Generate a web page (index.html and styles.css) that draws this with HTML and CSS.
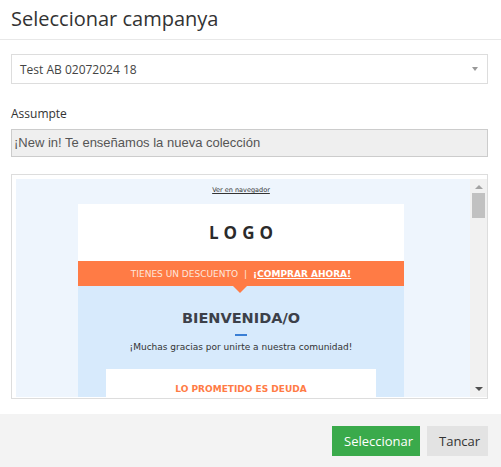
FILE: index.html
```html
<!DOCTYPE html>
<html lang="ca">
<head>
<meta charset="utf-8">
<title>Seleccionar campanya</title>
<link rel="stylesheet" href="styles.css">
</head>
<body>
<div class="modal">
  <div class="modal-header">
    <h1 class="modal-title">Seleccionar campanya</h1>
  </div>
  <div class="modal-body">
    <div class="select">
      <span class="select-value">Test AB 02072024 18</span>
      <span class="select-arrow"></span>
    </div>
    <label class="field-label">Assumpte</label>
    <div class="input-disabled">¡New in! Te enseñamos la nueva colección</div>
    <div class="preview">
      <div class="email">
        <div class="email-top"><span class="view-link">Ver en navegador</span></div>
        <div class="email-wrap">
          <div class="email-logo">LOGO</div>
          <div class="email-banner">
            <span class="banner-text">TIENES UN DESCUENTO</span>
            <span class="banner-sep">|</span>
            <span class="banner-link">¡COMPRAR AHORA!</span>
          </div>
          <div class="email-hero">
            <div class="hero-title">BIENVENIDA/O</div>
            <div class="hero-line"></div>
            <div class="hero-sub">¡Muchas gracias por unirte a nuestra comunidad!</div>
            <div class="hero-card">
              <div class="card-title">LO PROMETIDO ES DEUDA</div>
            </div>
          </div>
        </div>
      </div>
      <div class="scrollbar">
        <span class="sb-up"></span>
        <span class="sb-thumb"></span>
        <span class="sb-spacer"></span>
        <span class="sb-down"></span>
      </div>
    </div>
  </div>
  <div class="modal-footer">
    <button class="btn btn-primary">Seleccionar</button>
    <button class="btn btn-default">Tancar</button>
  </div>
</div>
</body>
</html>
```
FILE: styles.css
```css
* { box-sizing: border-box; }
html, body { margin: 0; padding: 0; background: #fff; }
body {
  font-family: "Open Sans", "Liberation Sans", sans-serif;
  color: #333;
  width: 501px;
  height: 467px;
  overflow: hidden;
}
.modal { display: flex; flex-direction: column; height: 467px; }
.modal-header {
  height: 40px;
  border-bottom: 1px solid #e8e8e8;
  padding: 5px 11px 0;
}
.modal-title {
  margin: 0;
  font-size: 20px;
  font-weight: 400;
  line-height: 27px;
  color: #333;
}
.modal-body {
  padding: 14px 13px 0 11px;
  display: flex;
  flex-direction: column;
}
.select {
  height: 30px;
  border: 1px solid #ddd;
  display: flex;
  align-items: center;
  justify-content: space-between;
  padding: 0 9px 0 8px;
}
.select-value { font-size: 12px; color: #444; }
.select-arrow {
  width: 0; height: 0;
  border-left: 3px solid transparent;
  border-right: 3px solid transparent;
  border-top: 4px solid #999;
}
.field-label {
  font-size: 12px;
  line-height: 18px;
  margin-top: 21px;
  margin-bottom: 6px;
  color: #333;
}
.input-disabled {
  height: 28px;
  border: 1px solid #ccc;
  background: #efefef;
  font-family: "Liberation Sans", Arial, sans-serif;
  font-size: 13px;
  color: #555;
  padding: 0 2px 1px;
  display: flex;
  align-items: center;
}
.preview {
  margin-top: 17px;
  height: 225px;
  border: 1px solid #ddd;
  padding: 4px 0 1px 4px;
  display: flex;
}
.email {
  flex: 1;
  background: #eef5fd;
  overflow: hidden;
  font-family: "DejaVu Sans", Verdana, sans-serif;
  padding-right: 4px;
}
.email-top {
  height: 25px;
  padding-top: 3px;
  text-align: center;
  line-height: 9px;
}
.view-link {
  font-size: 6.5px;
  color: #333;
  text-decoration: underline;
}
.email-wrap { width: 326px; margin: 0 auto; }
.email-logo {
  height: 57px;
  background: #fff;
  display: flex;
  align-items: center;
  justify-content: center;
  font-family: "Open Sans", sans-serif;
  font-weight: 700;
  font-size: 17px;
  letter-spacing: 5px;
  padding-left: 5px;
  color: #2b2b2b;
}
.email-banner {
  position: relative;
  height: 25px;
  background: #ff7b45;
  display: flex;
  align-items: center;
  justify-content: center;
  gap: 6px;
  font-size: 9px;
  color: #fff;
}
.email-banner::after {
  content: "";
  position: absolute;
  left: 155px;
  bottom: -7px;
  border-left: 7px solid transparent;
  border-right: 7px solid transparent;
  border-top: 7px solid #ff7b45;
}
.banner-text { color: #fde6dc; }
.banner-sep { color: #fde6dc; }
.banner-link { font-weight: 700; text-decoration: underline; }
.email-hero {
  background: #d7eafc;
  padding-top: 23px;
  display: flex;
  flex-direction: column;
  align-items: center;
  height: 200px;
}
.hero-title {
  font-size: 14.5px;
  line-height: 18px;
  font-weight: 700;
  color: #3c4049;
}
.hero-line {
  width: 12px;
  height: 2px;
  background: #3a7fd5;
  margin-top: 7px;
}
.hero-sub {
  font-size: 9px;
  line-height: 12px;
  color: #333;
  margin-top: 5px;
}
.hero-card {
  margin-top: 16px;
  width: 270px;
  background: #fff;
  padding-top: 14px;
  height: 80px;
  text-align: center;
}
.card-title {
  font-size: 9px;
  line-height: 12px;
  font-weight: 700;
  color: #ff7b45;
}
.scrollbar {
  width: 17px;
  background: #f1f1f1;
  display: flex;
  flex-direction: column;
  align-items: center;
  padding: 6px 0 6px;
}
.sb-up, .sb-down {
  width: 0; height: 0;
  border-left: 4px solid transparent;
  border-right: 4px solid transparent;
}
.sb-up { border-bottom: 4px solid #a3a3a3; }
.sb-down { border-top: 4px solid #505050; }
.sb-thumb {
  margin-top: 4px;
  width: 13px;
  height: 25px;
  background: #c1c1c1;
}
.sb-spacer { flex: 1; }
.modal-footer {
  margin-top: 15px;
  flex: 1;
  background: #f3f3f3;
  display: flex;
  justify-content: flex-end;
  align-items: flex-start;
  gap: 7px;
  padding: 12px 13px 0 0;
}
.btn {
  height: 30px;
  border: none;
  font-family: "Open Sans", sans-serif;
  font-size: 13px;
  padding: 0 12px;
  cursor: pointer;
}
.btn-primary { background: #3aaa4b; color: #fff; width: 88px; }
.btn-default { background: #e3e3e3; color: #333; width: 61px; }
```
